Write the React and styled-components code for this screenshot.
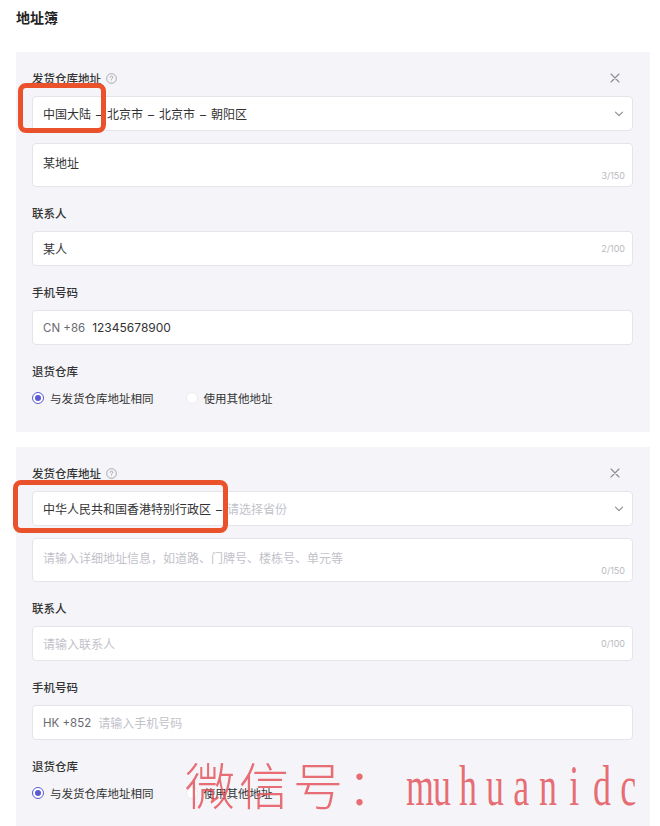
import React from 'react';
import styled, { createGlobalStyle } from 'styled-components';

const GlobalStyle = createGlobalStyle`
  html, body {
    margin: 0;
    padding: 0;
    background: #ffffff;
  }
  body {
    font-family: "Inter", "Noto Sans CJK SC", sans-serif;
    color: #333333;
  }
`;

const Page = styled.div`
  position: relative;
  width: 660px;
  height: 826px;
  overflow: hidden;
  box-sizing: border-box;
  padding: 8px 10px 0 16px;
`;

const Title = styled.div`
  font-size: 14px;
  line-height: 20px;
  font-weight: 700;
  color: #222222;
  margin-bottom: 24px;
`;

const Panel = styled.div`
  background: #f5f5f9;
  padding: 17px 17px 25px 16px;
  margin-bottom: 15px;
`;

const LabelRow = styled.div`
  display: flex;
  align-items: center;
  justify-content: space-between;
  height: 18px;
  margin-bottom: 9px;
  margin-top: ${({ first }) => (first ? '0' : '17px')};
`;

const Label = styled.div`
  display: flex;
  align-items: center;
  gap: 5px;
  font-size: 11.5px;
  font-weight: 500;
  color: #333333;
`;

const CloseBtn = styled.div`
  width: 14px;
  height: 14px;
  display: grid;
  place-items: center;
  margin-right: 11px;
  color: #8a8a92;
`;

const Box = styled.div`
  display: flex;
  box-sizing: border-box;
  height: ${({ tall }) => (tall ? '44px' : '35px')};
  align-items: ${({ tall }) => (tall ? 'stretch' : 'center')};
  background: #ffffff;
  border: 1px solid #e4e4ea;
  border-radius: 4px;
  padding: 0 10px;
  margin-top: ${({ gap }) => (gap ? '12px' : '0')};
  font-size: 12px;
  color: #333333;
`;

const Value = styled.span`
  flex: 1;
  white-space: nowrap;
  padding-top: ${({ tall }) => (tall ? '10px' : '0')};
  color: ${({ muted }) => (muted ? '#c2c2ca' : '#333333')};
`;

const Dash = styled.span`
  margin: 0 5px;
`;

const Placeholder = styled.span`
  color: #c2c2ca;
`;

const Counter = styled.span`
  font-size: 9px;
  color: #b9b9c0;
  align-self: ${({ bottom }) => (bottom ? 'flex-end' : 'center')};
  padding-bottom: ${({ bottom }) => (bottom ? '5px' : '0')};
  margin-right: -3px;
`;

const Prefix = styled.span`
  color: #6a6a72;
  margin-right: 7px;
  font-size: 11.5px;
`;

const Chevron = styled.div`
  color: #8a8a92;
  display: grid;
  place-items: center;
  margin-right: -2px;
`;

const RadioRow = styled.div`
  display: flex;
  align-items: center;
  height: 18px;
  gap: 32px;
`;

const RadioItem = styled.label`
  display: flex;
  align-items: center;
  gap: 6px;
  font-size: 11.5px;
  color: #333333;
`;

const RadioDot = styled.span`
  width: 12px;
  height: 12px;
  box-sizing: border-box;
  border-radius: 50%;
  background: #ffffff;
  border: ${({ on }) => (on ? '1.5px solid #5a5ad2' : '1px solid #ececf0')};
  display: grid;
  place-items: center;
  &::after {
    content: '';
    width: 6px;
    height: 6px;
    border-radius: 50%;
    background: ${({ on }) => (on ? '#5a5ad2' : 'transparent')};
  }
`;

const Highlight = styled.div`
  position: absolute;
  box-sizing: border-box;
  border: 5px solid #e9522b;
  border-radius: 8px;
`;

const Watermark = styled.div`
  position: absolute;
  left: 185px;
  top: 756px;
  display: flex;
  align-items: baseline;
  color: rgba(228, 84, 92, 0.85);
  white-space: nowrap;
  pointer-events: none;
`;

const WmCjk = styled.span`
  font-family: "Noto Sans CJK SC", sans-serif;
  font-size: 50px;
  font-weight: 300;
  line-height: 54px;
  letter-spacing: 4px;
`;

// SimSun-style half-width latin: every letter gets the same cell
const WmCell = styled.span`
  display: inline-block;
  width: 26.7px;
  text-align: center;
  font-family: "Liberation Serif", serif;
  font-size: 58px;
  line-height: 54px;
  transform: scaleX(0.62);
`;

function HelpIcon() {
  return (
    <svg width="11" height="11" viewBox="0 0 12 12" fill="none">
      <circle cx="6" cy="6" r="5.3" stroke="#9a9aa2" strokeWidth="0.9" />
      <path d="M4.6 4.7a1.4 1.4 0 1 1 2 1.3c-.4.2-.6.5-.6.9v.3" stroke="#9a9aa2" strokeWidth="0.9" strokeLinecap="round" />
      <circle cx="6" cy="8.7" r="0.5" fill="#9a9aa2" />
    </svg>
  );
}

function CloseIcon() {
  return (
    <svg width="10" height="10" viewBox="0 0 10 10">
      <path d="M1 1L9 9M9 1L1 9" stroke="currentColor" strokeWidth="1.1" strokeLinecap="round" />
    </svg>
  );
}

function ChevronIcon() {
  return (
    <svg width="10" height="6" viewBox="0 0 10 6" fill="none">
      <path d="M1.5 1.2L5 4.6l3.5-3.4" stroke="currentColor" strokeWidth="1.1" strokeLinecap="round" strokeLinejoin="round" />
    </svg>
  );
}

function AddressCard({ region, regionHint, detail, detailCount, contact, contactCount, code, phone }) {
  return (
    <Panel>
      <LabelRow first>
        <Label>发货仓库地址 <HelpIcon /></Label>
        <CloseBtn><CloseIcon /></CloseBtn>
      </LabelRow>
      <Box>
        <Value>
          {region.map((r, i) => (
            <React.Fragment key={i}>
              {i > 0 && <Dash>–</Dash>}
              {r}
            </React.Fragment>
          ))}
          {regionHint && (
            <>
              <Dash>–</Dash>
              <Placeholder>{regionHint}</Placeholder>
            </>
          )}
        </Value>
        <Chevron><ChevronIcon /></Chevron>
      </Box>
      <Box tall gap>
        <Value tall muted={!detail.value}>{detail.value || detail.hint}</Value>
        <Counter bottom>{detailCount}</Counter>
      </Box>

      <LabelRow>
        <Label>联系人</Label>
      </LabelRow>
      <Box>
        <Value muted={!contact.value}>{contact.value || contact.hint}</Value>
        <Counter>{contactCount}</Counter>
      </Box>

      <LabelRow>
        <Label>手机号码</Label>
      </LabelRow>
      <Box>
        <Prefix>{code}</Prefix>
        <Value muted={!phone.value}>{phone.value || phone.hint}</Value>
      </Box>

      <LabelRow>
        <Label>退货仓库</Label>
      </LabelRow>
      <RadioRow>
        <RadioItem><RadioDot on />与发货仓库地址相同</RadioItem>
        <RadioItem><RadioDot />使用其他地址</RadioItem>
      </RadioRow>
    </Panel>
  );
}

export default function App() {
  return (
    <Page>
      <GlobalStyle />
      <Title>地址簿</Title>
      <AddressCard
        region={['中国大陆', '北京市', '北京市', '朝阳区']}
        detail={{ value: '某地址' }}
        detailCount="3/150"
        contact={{ value: '某人' }}
        contactCount="2/100"
        code="CN +86"
        phone={{ value: '12345678900' }}
      />
      <AddressCard
        region={['中华人民共和国香港特别行政区']}
        regionHint="请选择省份"
        detail={{ hint: '请输入详细地址信息，如道路、门牌号、楼栋号、单元等' }}
        detailCount="0/150"
        contact={{ hint: '请输入联系人' }}
        contactCount="0/100"
        code="HK +852"
        phone={{ hint: '请输入手机号码' }}
      />
      <Highlight style={{ left: 18, top: 83, width: 88, height: 50 }} />
      <Highlight style={{ left: 13, top: 480, width: 215, height: 53 }} />
      <Watermark>
        <WmCjk>微信号：</WmCjk>
        {'muhuanidc'.split('').map((ch, i) => (
          <WmCell key={i}>{ch}</WmCell>
        ))}
      </Watermark>
    </Page>
  );
}
